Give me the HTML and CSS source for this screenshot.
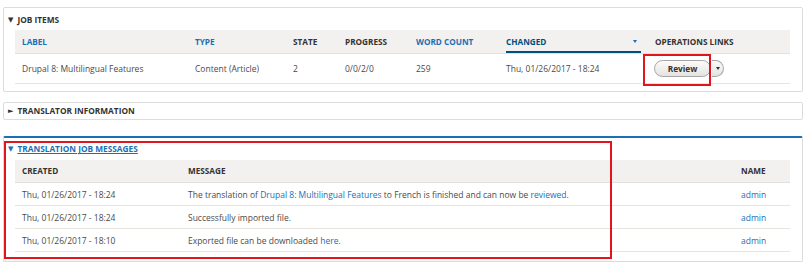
FILE: index.html
```html
<!DOCTYPE html>
<html>
<head>
<meta charset="utf-8">
<link rel="stylesheet" href="styles.css">
</head>
<body>
<div class="page">
  <section class="box">
    <div class="legend"><span class="tri">▼</span>JOB ITEMS</div>
    <table class="grid items">
      <colgroup>
        <col style="width:173px"><col style="width:98px"><col style="width:52px"><col style="width:71px"><col style="width:90px"><col style="width:149px"><col>
      </colgroup>
      <thead>
        <tr>
          <th><a>LABEL</a></th>
          <th><a>TYPE</a></th>
          <th>STATE</th>
          <th>PROGRESS</th>
          <th><a>WORD COUNT</a></th>
          <th class="active"><a>CHANGED<span class="caret"></span></a></th>
          <th>OPERATIONS LINKS</th>
        </tr>
      </thead>
      <tbody>
        <tr class="tall">
          <td>Drupal 8: Multilingual Features</td>
          <td>Content (Article)</td>
          <td>2</td>
          <td>0/0/2/0</td>
          <td>259</td>
          <td>Thu, 01/26/2017 - 18:24</td>
          <td>
            <div class="ops"><span class="btn">Review</span><span class="toggle"><span class="caret dark"></span></span></div>
            <div class="mark mark-review"></div>
          </td>
        </tr>
      </tbody>
    </table>
  </section>

  <section class="box closed">
    <div class="legend"><span class="tri">►</span>TRANSLATOR INFORMATION</div>
  </section>

  <section class="box messages">
    <div class="mark mark-messages"></div>
    <div class="legend link"><span class="tri">▼</span><a>TRANSLATION JOB MESSAGES</a></div>
    <table class="grid">
      <colgroup>
        <col style="width:166px"><col><col style="width:56px">
      </colgroup>
      <thead>
        <tr><th>CREATED</th><th>MESSAGE</th><th>NAME</th></tr>
      </thead>
      <tbody>
        <tr><td>Thu, 01/26/2017 - 18:24</td><td>The translation of <a>Drupal 8: Multilingual Features</a> to French is finished and can now be <a>reviewed</a>.</td><td><a>admin</a></td></tr>
        <tr><td>Thu, 01/26/2017 - 18:24</td><td>Successfully imported file.</td><td><a>admin</a></td></tr>
        <tr><td>Thu, 01/26/2017 - 18:10</td><td>Exported file can be downloaded <a>here</a>.</td><td><a>admin</a></td></tr>
      </tbody>
    </table>
  </section>
</div>
</body>
</html>
```

FILE: styles.css
```css
* { box-sizing: border-box; }
html, body { margin: 0; padding: 0; background: #fff; }
body {
  font-family: "Open Sans", "DejaVu Sans", sans-serif;
  font-size: 8.5px;
  color: #4a4a4a;
}
.page {
  padding: 7px 7px 0 3px;
  display: flex;
  flex-direction: column;
  width: 809px;
}
.box {
  position: relative;
  border: 1px solid #dcdcdc;
  border-radius: 2px;
  padding: 0 11px 7px 11px;
  width: 800px;
}
.box + .box { margin-top: 10px; }
.box.closed { height: 18px; padding: 0 11px; }
.box.closed .legend { height: 16px; }
.box.messages {
  margin-top: 16px;
  border-top: 2px solid #1a6fb5;
  padding-bottom: 9px;
}
.legend {
  height: 22px;
  display: flex;
  align-items: center;
  margin-left: -7px;
  font-weight: bold;
  color: #333;
  font-size: 8.3px;
}
.tri {
  font-size: 7px;
  margin-right: 4px;
  color: #333;
}
.legend.link { height: 22px; }
.legend.link .tri { color: #1a6fb5; }
.legend.link a { color: #1a6fb5; text-decoration: underline; }

.grid {
  border-collapse: collapse;
  table-layout: fixed;
  width: 775px;
}
.grid th {
  background: #f2f1ef;
  text-align: left;
  font-weight: bold;
  color: #333;
  font-size: 8.2px;
  height: 23px;
  padding: 0 7px;
  border-bottom: 1px solid #e2e0db;
  white-space: nowrap;
}
.grid th a { color: #1a6fb5; }
.grid th.active a {
  color: #004f80;
  display: flex;
  align-items: center;
  justify-content: space-between;
  height: 23px;
  border-bottom: 2px solid #004f80;
  margin-bottom: -1px;
  padding-top: 2px;
}
.caret {
  display: inline-block;
  width: 0; height: 0;
  border-left: 2px solid transparent;
  border-right: 2px solid transparent;
  border-top: 3px solid #1a6fb5;
  margin-right: 4px;
}
.caret.dark { border-top-color: #333; margin: 0; }
.grid td {
  padding: 0 7px;
  height: 23px;
  border-bottom: 1px solid #e6e4df;
  white-space: nowrap;
  color: #4a4a4a;
}
.grid tr.tall td { height: 30px; position: relative; }
.grid td a { color: #1a6fb5; }

.ops { display: flex; align-items: center; margin-left: -1px; }
.btn {
  display: inline-flex;
  align-items: center;
  justify-content: center;
  width: 57px;
  height: 17px;
  border: 1px solid #a6a6a6;
  border-radius: 9px;
  background: linear-gradient(#fbfbfa, #e4e3df);
  font-weight: bold;
  color: #333;
  font-size: 8.3px;
}
.toggle {
  display: inline-flex;
  align-items: center;
  justify-content: center;
  width: 12px;
  height: 17px;
  margin-left: 1px;
  border: 1px solid #a6a6a6;
  border-left: none;
  border-radius: 0 9px 9px 0;
  background: linear-gradient(#fbfbfa, #e4e3df);
}

.mark {
  position: absolute;
  border: 2px solid #e0161c;
  pointer-events: none;
}
.mark-review {
  left: -5px;
  top: 0px;
  width: 68px;
  height: 32px;
}
.mark-messages {
  left: 0px;
  top: 3px;
  width: 608px;
  height: 118px;
}
```
